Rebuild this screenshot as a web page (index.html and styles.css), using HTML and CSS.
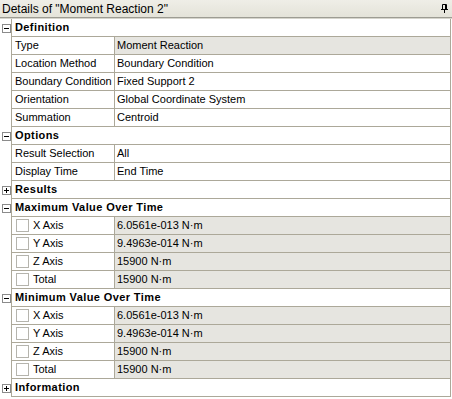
FILE: index.html
```html
<!DOCTYPE html>
<html lang="en">
  <head>
    <meta charset="UTF-8" />
    <title>Details of "Moment Reaction 2"</title>
    <link rel="stylesheet" href="styles.css">
  </head>
  <body>
    <div class="painel">
      <div class="titulo">
        <span>Details of "Moment Reaction 2"</span>
        <svg class="pino" width="7" height="9" viewBox="0 0 7 9">
          <path d="M1.5 0.5h4M1.5 0.5v5M4.5 0.5v5M5.5 0.5v5M0 5.5h7M3.5 5.5v3.5" stroke="#000" stroke-width="1" fill="none" />
        </svg>
      </div>

      <div class="grupo">
        <span class="expand"><i class="caixinha"></i></span><span class="grupo-nome">Definition</span>
      </div>
      <div class="linha"><span class="margem"></span><span class="nome">Type</span><span class="valor cinza">Moment Reaction</span></div>
      <div class="linha"><span class="margem"></span><span class="nome">Location Method</span><span class="valor">Boundary Condition</span></div>
      <div class="linha"><span class="margem"></span><span class="nome">Boundary Condition</span><span class="valor">Fixed Support 2</span></div>
      <div class="linha"><span class="margem"></span><span class="nome">Orientation</span><span class="valor">Global Coordinate System</span></div>
      <div class="linha"><span class="margem"></span><span class="nome">Summation</span><span class="valor">Centroid</span></div>

      <div class="grupo">
        <span class="expand"><i class="caixinha"></i></span><span class="grupo-nome">Options</span>
      </div>
      <div class="linha"><span class="margem"></span><span class="nome">Result Selection</span><span class="valor">All</span></div>
      <div class="linha"><span class="margem"></span><span class="nome">Display Time</span><span class="valor">End Time</span></div>

      <div class="grupo">
        <span class="expand"><i class="caixinha mais"></i></span><span class="grupo-nome">Results</span>
      </div>

      <div class="grupo">
        <span class="expand"><i class="caixinha"></i></span><span class="grupo-nome">Maximum Value Over Time</span>
      </div>
      <div class="linha"><span class="margem"></span><span class="nome"><i class="caixa"></i>X Axis</span><span class="valor cinza">6.0561e-013 N·m</span></div>
      <div class="linha"><span class="margem"></span><span class="nome"><i class="caixa"></i>Y Axis</span><span class="valor cinza">9.4963e-014 N·m</span></div>
      <div class="linha"><span class="margem"></span><span class="nome"><i class="caixa"></i>Z Axis</span><span class="valor cinza">15900 N·m</span></div>
      <div class="linha"><span class="margem"></span><span class="nome"><i class="caixa"></i>Total</span><span class="valor cinza">15900 N·m</span></div>

      <div class="grupo">
        <span class="expand"><i class="caixinha"></i></span><span class="grupo-nome">Minimum Value Over Time</span>
      </div>
      <div class="linha"><span class="margem"></span><span class="nome"><i class="caixa"></i>X Axis</span><span class="valor cinza">6.0561e-013 N·m</span></div>
      <div class="linha"><span class="margem"></span><span class="nome"><i class="caixa"></i>Y Axis</span><span class="valor cinza">9.4963e-014 N·m</span></div>
      <div class="linha"><span class="margem"></span><span class="nome"><i class="caixa"></i>Z Axis</span><span class="valor cinza">15900 N·m</span></div>
      <div class="linha"><span class="margem"></span><span class="nome"><i class="caixa"></i>Total</span><span class="valor cinza">15900 N·m</span></div>

      <div class="grupo">
        <span class="expand"><i class="caixinha mais"></i></span><span class="grupo-nome">Information</span>
      </div>
    </div>
  </body>
</html>
```

FILE: styles.css
```css
body {
  margin: 0;
  background: #ffffff;
  font-family: "Liberation Sans", Arial, sans-serif;
  font-size: 11px;
  color: #000;
}

.painel {
  width: 452px;
  height: 399px;
  background: #fff;
  overflow: hidden;
}

.titulo {
  height: 17px;
  border-bottom: 1px solid #9d9c93;
  box-shadow: 0 1px 0 #d6d5cc;
  margin-bottom: 1px;
  background: linear-gradient(to bottom, #efeee7, #e4e3d9);
  display: flex;
  align-items: center;
  justify-content: space-between;
  padding: 0 4px 0 2px;
  font-size: 12px;
}

.pino {
  margin-top: -1px;
}

.grupo,
.linha {
  display: grid;
  grid-template-columns: 12px 103px 1fr;
  height: 18px;
  width: 451px;
}

.grupo {
  grid-template-columns: 12px 1fr;
}

.expand,
.margem {
  border-right: 1px solid #aca899;
}

.expand {
  display: flex;
  align-items: center;
  padding-left: 2px;
}

.caixinha {
  position: relative;
  width: 7px;
  height: 7px;
  border: 1px solid #8b8b8b;
  background: #fff;
}

.caixinha::before {
  content: "";
  position: absolute;
  left: 1px;
  top: 3px;
  width: 5px;
  height: 1px;
  background: #000;
}

.caixinha.mais::after {
  content: "";
  position: absolute;
  left: 3px;
  top: 1px;
  width: 1px;
  height: 5px;
  background: #000;
}

.grupo-nome {
  font-weight: bold;
  letter-spacing: 0.4px;
  padding-left: 3px;
  line-height: 17px;
  border-bottom: 1px solid #aca899;
  border-right: 1px solid #aca899;
}

.nome {
  padding-left: 3px;
  line-height: 17px;
  border-bottom: 1px solid #aca899;
  border-right: 1px solid #aca899;
  display: flex;
  align-items: center;
  white-space: nowrap;
}

.valor {
  padding-left: 2px;
  line-height: 17px;
  border-bottom: 1px solid #aca899;
  border-right: 1px solid #aca899;
  white-space: nowrap;
}

.cinza {
  background: #e6e5e0;
}

.caixa {
  width: 11px;
  height: 11px;
  border: 1px solid #b5b4ad;
  background: #fff;
  margin: 0 4px 0 1px;
}
```
